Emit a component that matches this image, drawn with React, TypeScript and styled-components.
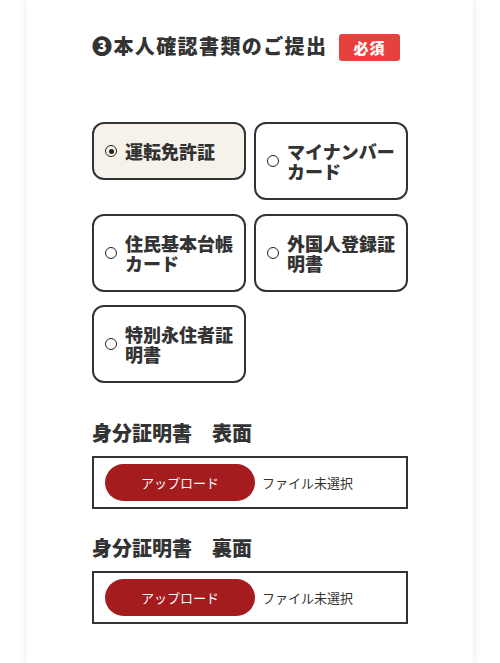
import styled, { createGlobalStyle } from "styled-components"
import { useState } from "react"

const GlobalStyle = createGlobalStyle`
  html, body {
    margin: 0;
    background: #ffffff;
    font-family: "Noto Sans CJK JP", "Noto Sans", sans-serif;
    color: #333333;
  }
`

const Page = styled.div`
  padding: 0 27px;
`

const Card = styled.section`
  background: #ffffff;
  min-height: 663px;
  box-sizing: border-box;
  padding: 29px 65px 30px;
  box-shadow: 0 0 10px rgba(0, 0, 0, 0.09);
`

const HeadingRow = styled.div`
  display: flex;
  align-items: center;
  gap: 12px;
`

const Heading = styled.h2`
  margin: 0;
  font-size: 20px;
  font-weight: 900;
  letter-spacing: 1.4px;
  line-height: 34px;
  color: #333;
`

const Badge = styled.span`
  background: #e8413d;
  color: #fff;
  font-size: 15px;
  font-weight: 900;
  border-radius: 3px;
  padding: 2px 15px 2px 14px;
  line-height: 23px;
  letter-spacing: 1px;
  margin-top: 2px;
`

const Options = styled.div`
  display: flex;
  flex-wrap: wrap;
  align-items: flex-start;
  gap: 13.5px 8px;
  margin-top: 59px;
`

const Option = styled.label<{ $selected: boolean }>`
  width: 154px;
  box-sizing: border-box;
  display: flex;
  align-items: center;
  gap: 8px;
  padding: 17px 10px 17px 11px;
  border: 2px solid #333;
  border-radius: 12px;
  background: ${({ $selected }) => ($selected ? "#f6f2ea" : "#fff")};
  cursor: pointer;
`

const Radio = styled.span<{ $selected: boolean }>`
  flex: none;
  width: 12px;
  height: 12px;
  box-sizing: border-box;
  border: 1.5px solid #222;
  border-radius: 50%;
  display: flex;
  align-items: center;
  justify-content: center;

  &::after {
    content: "";
    width: 5px;
    height: 5px;
    border-radius: 50%;
    background: #222;
    display: ${({ $selected }) => ($selected ? "block" : "none")};
  }
`

const OptionText = styled.span`
  font-size: 18px;
  font-weight: 900;
  line-height: 20px;
  color: #333;
`

const FieldLabel = styled.h3<{ $first?: boolean }>`
  margin: ${({ $first }) => ($first ? "39px" : "28px")} 0 0;
  font-size: 20px;
  font-weight: 900;
  line-height: 22px;
  color: #333;
`

const FileBox = styled.div`
  margin-top: 12px;
  border: 2px solid #333;
  padding: 6px 11px;
  display: flex;
  align-items: center;
  gap: 7px;
`

const UploadButton = styled.button`
  width: 150px;
  height: 37px;
  border: none;
  border-radius: 19px;
  background: #a51c1e;
  color: #fff;
  font-family: inherit;
  font-size: 13px;
  cursor: pointer;
`

const FileName = styled.span`
  font-size: 13px;
  color: #333;
`

const documents = [
  "運転免許証",
  "マイナンバーカード",
  "住民基本台帳カード",
  "外国人登録証明書",
  "特別永住者証明書",
]

const sides = ["表面", "裏面"]

export default function App() {
  const [selected, setSelected] = useState(0)

  return (
    <>
      <GlobalStyle />
      <Page>
        <Card>
          <HeadingRow>
            <Heading>❸本人確認書類のご提出</Heading>
            <Badge>必須</Badge>
          </HeadingRow>

          <Options>
            {documents.map((doc, i) => (
              <Option key={doc} $selected={selected === i} onClick={() => setSelected(i)}>
                <Radio $selected={selected === i} />
                <OptionText>{doc}</OptionText>
              </Option>
            ))}
          </Options>

          {sides.map((side, i) => (
            <div key={side}>
              <FieldLabel $first={i === 0}>身分証明書　{side}</FieldLabel>
              <FileBox>
                <UploadButton>アップロード</UploadButton>
                <FileName>ファイル未選択</FileName>
              </FileBox>
            </div>
          ))}
        </Card>
      </Page>
    </>
  )
}
